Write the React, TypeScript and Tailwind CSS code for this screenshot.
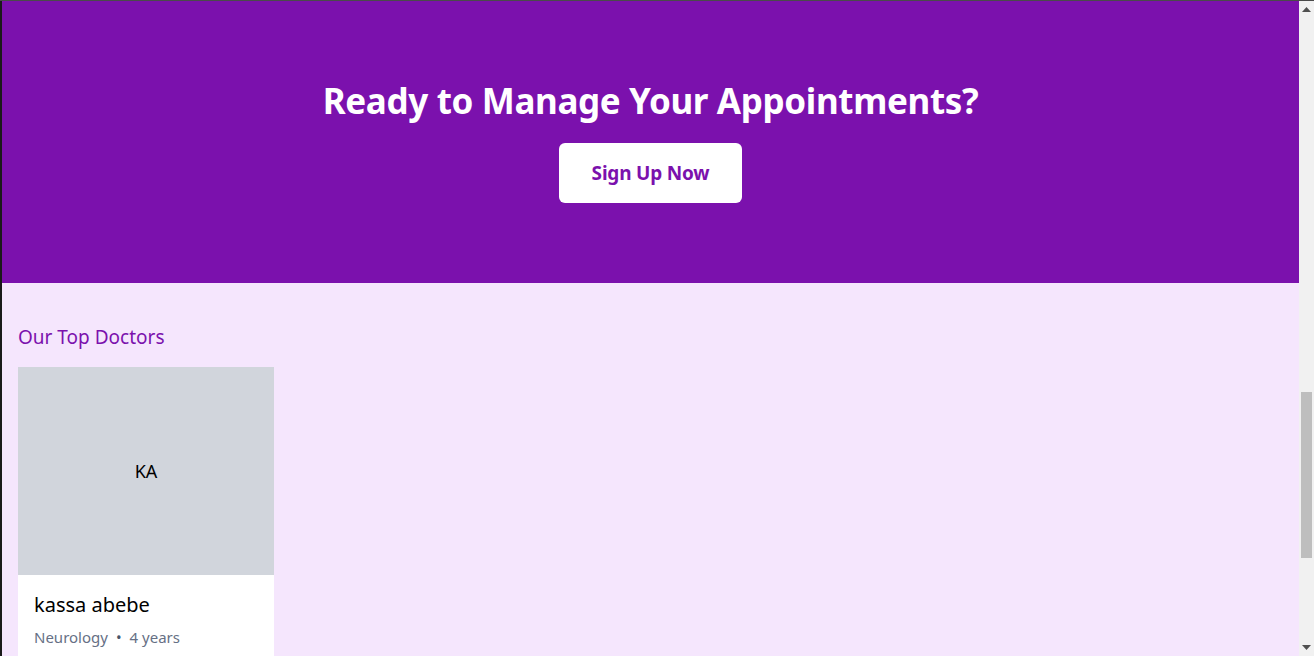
import React from "react";

const doctors = [
    { initials: "KA", name: "kassa abebe", specialty: "Neurology", experience: "4 years" },
];

export default function App() {
    return (
        <div className="h-[656px] overflow-hidden flex flex-col bg-[#f5e6fd]" style={{ fontFamily: "'Noto Sans', 'Open Sans', sans-serif" }}>
            <div className="h-px bg-[#4a4a4a] shrink-0"></div>
            <div className="flex flex-1 min-h-0">
                <div className="w-[2px] bg-[#1a1a1a] shrink-0"></div>

                <main className="flex-1 min-w-0">
                    {/* CTA banner */}
                    <section className="bg-[#7b11ad] py-20 flex flex-col items-center">
                        <h2 className="text-[35px] leading-10 font-bold text-white mb-[22px] tracking-[-0.35px]">
                            Ready to Manage Your Appointments?
                        </h2>
                        <button className="w-[183px] h-[60px] bg-white rounded-md text-[#7b11ad] text-[19px] font-bold tracking-[-0.2px]">
                            Sign Up Now
                        </button>
                    </section>

                    {/* Top doctors */}
                    <section className="px-4 pt-10">
                        <h3 className="text-[19px] leading-7 text-[#7b11ad] mb-4">Our Top Doctors</h3>
                        <div className="grid grid-cols-[256px] gap-6">
                            {doctors.map((doc) => (
                                <div key={doc.name} className="bg-white">
                                    <div className="h-[208px] bg-gray-300 flex items-center justify-center text-black text-lg">
                                        {doc.initials}
                                    </div>
                                    <div className="p-4">
                                        <h4 className="text-xl leading-7 text-black">{doc.name}</h4>
                                        <p className="mt-2 text-[15px] leading-5 text-[#667085] flex items-center gap-2">
                                            <span>{doc.specialty}</span>
                                            <span className="text-[#475569]">•</span>
                                            <span>{doc.experience}</span>
                                        </p>
                                    </div>
                                </div>
                            ))}
                        </div>
                    </section>
                </main>

                {/* scrollbar */}
                <div className="w-[15px] shrink-0 bg-[#f1f1f1] flex flex-col items-center">
                    <svg width="9" height="5" viewBox="0 0 9 5" className="mt-[6px]"><path d="M4.5 0L9 5H0z" fill="#505050" /></svg>
                    <div className="mt-[380px] w-[11px] h-[166px] bg-[#bebebe]"></div>
                    <div className="flex-1"></div>
                    <svg width="9" height="5" viewBox="0 0 9 5" className="mb-[6px]"><path d="M0 0H9L4.5 5z" fill="#505050" /></svg>
                </div>
            </div>
        </div>
    );
}
